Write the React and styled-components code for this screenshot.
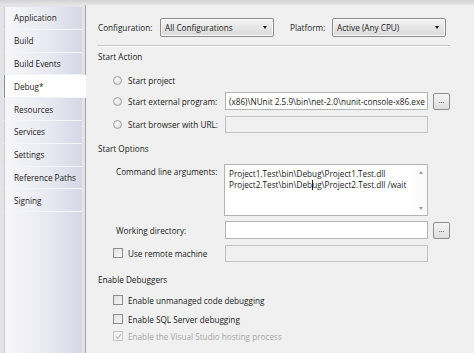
import React from 'react';
import styled, { createGlobalStyle } from 'styled-components';

const GlobalStyle = createGlobalStyle`
    html, body {
        margin: 0;
        padding: 0;
        background: #ffffff;
    }
    body {
        font-family: "Open Sans", "DejaVu Sans", sans-serif;
        font-size: 8.2px;
        color: #1b1b1b;
    }
`;

const Frame = styled.div`
    width: 474px;
    height: 353px;
    display: flex;
    flex-direction: column;
    overflow: hidden;
    background: #dedede;
`;

const TopBand = styled.div`
    height: 5px;
    background: linear-gradient(#d2d2d2, #e6e6e6);
`;

const Body = styled.div`
    flex: 1;
    display: flex;
`;

const Sidebar = styled.div`
    width: 85px;
    display: flex;
    flex-direction: column;
    padding: 2px 0 0 4px;
    box-sizing: border-box;
    background: #e4e4e6;
`;

const Tab = styled.div`
    height: 22.8px;
    flex: none;
    display: flex;
    align-items: center;
    padding-left: 9px;
    box-sizing: border-box;
    border-bottom: 1px solid #f4f5f9;
    background: ${ p => p.$active ? '#ffffff' : 'linear-gradient(to right, #f7f7fa, #e9eaf1 55%, #d4d7e5)' };
    border-left: 1px solid ${ p => p.$active ? '#7d93b4' : '#c9cbd6' };
    margin-right: ${ p => p.$active ? '-1px' : '3px' };
    position: relative;
    z-index: ${ p => p.$active ? 2 : 1 };
`;

const Tail = styled.div`
    flex: 1;
    position: relative;
    margin-right: 3px;
    background: linear-gradient(to right, #f7f7fa, #e9eaf1 55%, #d4d7e5);
    border-left: 1px solid #c9cbd6;

    ::after {
        content: '';
        position: absolute;
        inset: 0;
        background: #f6f7fb;
        clip-path: polygon(0 7px, 100% 33px, 100% 100%, 0 100%);
    }
`;

const Panel = styled.div`
    flex: 1;
    background: #f0f0f0;
    border-left: 1px solid #a3a3a3;
    padding: 13px 0 0 12px;
    display: flex;
    flex-direction: column;
`;

const Row = styled.div`
    display: flex;
    align-items: ${ p => p.$top ? 'flex-start' : 'center' };
    height: ${ p => p.$h }px;
    margin-top: ${ p => p.$mt || 0 }px;
    padding-left: ${ p => p.$indent || 0 }px;
`;

const Label = styled.span`
    white-space: nowrap;
    width: ${ p => p.$w ? `${ p.$w }px` : 'auto' };
    flex: none;
    color: ${ p => p.$disabled ? '#a6a6a6' : 'inherit' };
    padding-top: ${ p => p.$pt || 0 }px;
    margin-left: ${ p => p.$ml || 0 }px;
`;

const Select = styled.div`
    width: 114px;
    height: 19px;
    box-sizing: border-box;
    border: 1px solid #8b8b8b;
    border-radius: 2px;
    background: linear-gradient(#f4f4f4, #e6e6e6 50%, #d9d9d9);
    display: flex;
    align-items: center;
    justify-content: space-between;
    padding: 0 6px 0 4px;
    box-shadow: inset 0 0 0 1px #fafafa;
`;

const Arrow = styled.span`
    width: 0;
    height: 0;
    border-left: 2.5px solid transparent;
    border-right: 2.5px solid transparent;
    border-top: 3px solid #1a1a1a;
`;

const Separator = styled.div`
    width: 353px;
    margin-left: -1px;
    height: 1px;
    background: #c5c5c5;
    border-bottom: 1px solid #fbfbfb;
`;

const SectionHeader = styled.div`
    display: flex;
    align-items: center;
    width: 352px;
    height: 14px;
    margin-top: ${ p => p.$mt }px;

    ::after {
        content: '';
        flex: 1;
        height: 1px;
        margin-left: 6px;
        background: #c5c5c5;
        border-bottom: 1px solid #fbfbfb;
    }
`;

const Radio = styled.span`
    width: 7px;
    height: 7px;
    border-radius: 50%;
    border: 1px solid #a2a2a2;
    background: radial-gradient(circle at 40% 35%, #fafafa, #d6d6d6);
    margin-right: 6px;
    flex: none;
    display: flex;
    align-items: center;
    justify-content: center;

    ::after {
        content: '';
        width: 4px;
        height: 4px;
        border-radius: 50%;
        background: ${ p => p.$checked ? 'radial-gradient(circle at 40% 35%, #6fa0b4, #1f4d60)' : 'transparent' };
    }
`;

const Check = styled.span`
    width: 8px;
    height: 8px;
    border: 1px solid ${ p => p.$disabled ? '#c6c6c6' : '#8f8f8f' };
    background: ${ p => p.$disabled ? '#f4f4f4' : 'linear-gradient(135deg, #e2e2e2, #f6f6f6)' };
    margin-right: 5px;
    flex: none;
    display: flex;
    align-items: center;
    justify-content: center;
`;

const Input = styled.div`
    width: 203px;
    height: ${ p => p.$h || 18 }px;
    box-sizing: border-box;
    border: 1px solid ${ p => p.$disabled ? '#c2c2c2' : '#b3b3b3' };
    background: ${ p => p.$disabled ? '#f0f0f0' : '#ffffff' };
    display: flex;
    align-items: center;
    padding-left: 3px;
    white-space: nowrap;
    overflow: hidden;
    flex: none;
`;

const Browse = styled.div`
    width: 17px;
    height: 17px;
    margin-left: 5px;
    box-sizing: border-box;
    border: 1px solid #8e8e8e;
    border-radius: 2px;
    background: linear-gradient(#f5f5f5, #dddddd);
    display: flex;
    align-items: center;
    justify-content: center;
    font-size: 7px;
    line-height: 1;
    padding-bottom: 2px;
`;

const TextArea = styled.div`
    width: 204px;
    height: 52px;
    box-sizing: border-box;
    border: 1px solid #b3b3b3;
    background: #ffffff;
    display: flex;
    flex: none;
    margin-left: -1px;
`;

const AreaText = styled.div`
    flex: 1;
    padding: 3px 0 0 4px;
    line-height: 11px;
    white-space: nowrap;
`;

const Caret = styled.span`
    display: inline-block;
    width: 1px;
    height: 10px;
    background: #222;
    vertical-align: -2px;
    margin: 0 -0.5px;
`;

const ScrollBar = styled.div`
    width: 12px;
    display: flex;
    flex-direction: column;
    justify-content: space-between;
    align-items: center;
    padding: 6px 0 5px;
    background: #fbfbfb;
`;

const ScrollArrow = styled.span`
    width: 0;
    height: 0;
    border-left: 2px solid transparent;
    border-right: 2px solid transparent;
    border-bottom: ${ p => p.$up ? '3px solid #9a9a9a' : 'none' };
    border-top: ${ p => p.$up ? 'none' : '3px solid #9a9a9a' };
`;

const tabs = [ 'Application', 'Build', 'Build Events', 'Debug*', 'Resources', 'Services', 'Settings', 'Reference Paths', 'Signing' ];

const App = () => {
    return (
        <>
            <GlobalStyle />
            <Frame>
                <TopBand />
                <Body>
                    <Sidebar>
                        { tabs.map( ( t ) => (
                            <Tab key={ t } $active={ t === 'Debug*' }>{ t }</Tab>
                        ) ) }
                        <Tail />
                    </Sidebar>
                    <Panel>
                        <Row $h={ 19 }>
                            <Label $w={ 62 }>Configuration:</Label>
                            <Select><span>All Configurations</span><Arrow /></Select>
                            <Label $ml={ 16 } $w={ 42 }>Platform:</Label>
                            <Select><span>Active (Any CPU)</span><Arrow /></Select>
                        </Row>
                        <Row $h={ 2 } $mt={ 8 }><Separator /></Row>

                        <SectionHeader $mt={ 2 }>Start Action</SectionHeader>
                        <Row $h={ 20 } $mt={ 7 } $indent={ 15 }>
                            <Radio /><Label>Start project</Label>
                        </Row>
                        <Row $h={ 20 } $mt={ 1 } $indent={ 15 }>
                            <Radio $checked /><Label $w={ 97 }>Start external program:</Label>
                            <Input>(x86)\NUnit 2.5.9\bin\net-2.0\nunit-console-x86.exe</Input>
                            <Browse>...</Browse>
                        </Row>
                        <Row $h={ 20 } $mt={ 3 } $indent={ 15 }>
                            <Radio /><Label $w={ 97 }>Start browser with URL:</Label>
                            <Input $disabled $h={ 17 } />
                        </Row>

                        <SectionHeader $mt={ 7 }>Start Options</SectionHeader>
                        <Row $h={ 52 } $mt={ 9 } $indent={ 18 } $top>
                            <Label $w={ 109 } $pt={ 2 }>Command line arguments:</Label>
                            <TextArea>
                                <AreaText>
                                    Project1.Test\bin\Debug\Project1.Test.dll<br />
                                    Project2.Test\bin\Deb<Caret />ug\Project2.Test.dll /wait
                                </AreaText>
                                <ScrollBar><ScrollArrow $up /><ScrollArrow /></ScrollBar>
                            </TextArea>
                        </Row>
                        <Row $h={ 18 } $mt={ 5 } $indent={ 18 }>
                            <Label $w={ 109 }>Working directory:</Label>
                            <Input />
                            <Browse>...</Browse>
                        </Row>
                        <Row $h={ 18 } $mt={ 5 } $indent={ 15 }>
                            <Check /><Label $w={ 97 }>Use remote machine</Label>
                            <Input $disabled $h={ 17 } />
                        </Row>

                        <SectionHeader $mt={ 10 }>Enable Debuggers</SectionHeader>
                        <Row $h={ 18 } $mt={ 5 } $indent={ 15 }>
                            <Check /><Label>Enable unmanaged code debugging</Label>
                        </Row>
                        <Row $h={ 18 } $mt={ 1 } $indent={ 15 }>
                            <Check /><Label>Enable SQL Server debugging</Label>
                        </Row>
                        <Row $h={ 16 } $mt={ 0 } $indent={ 15 }>
                            <Check $disabled>
                                <svg width="7" height="7" viewBox="0 0 7 7">
                                    <path d="M1 3.6 L2.8 5.5 L6 1" fill="none" stroke="#b0b0b0" strokeWidth="1.1" />
                                </svg>
                            </Check>
                            <Label $disabled>Enable the Visual Studio hosting process</Label>
                        </Row>
                    </Panel>
                </Body>
            </Frame>
        </>
    );
};

export default App;
